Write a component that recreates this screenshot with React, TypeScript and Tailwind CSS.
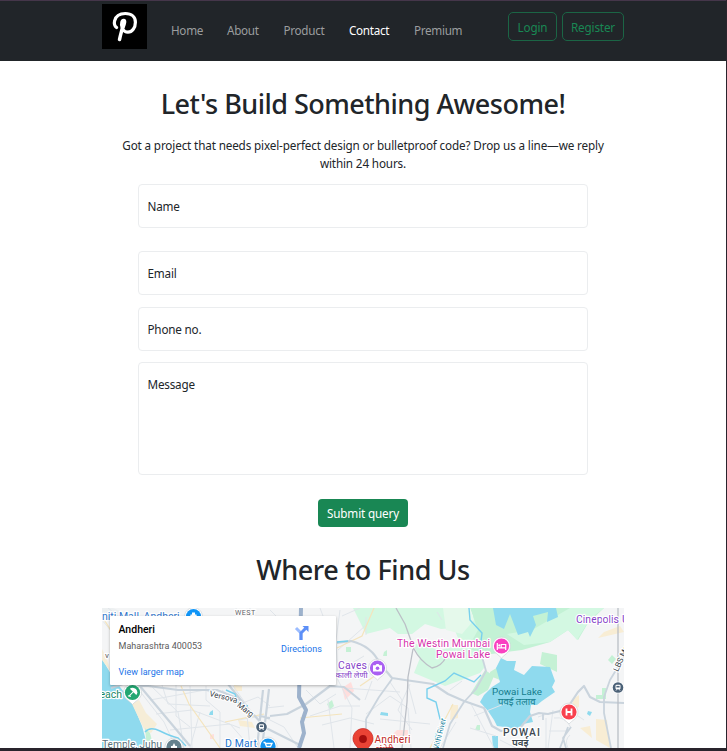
import type { ReactNode } from "react";

const navItems = [
  { label: "Home", box: "w-[56px]", active: false },
  { label: "About", box: "w-[56.5px]", active: false },
  { label: "Product", box: "w-[65.5px]", active: false },
  { label: "Contact", box: "w-[65px]", active: true },
  { label: "Premium", box: "w-[60px]", active: false },
];

function Logo() {
  return (
    <div className="mt-[3px] h-[45px] w-[45px] shrink-0 bg-black">
      <svg viewBox="0 0 45 45" className="h-full w-full" fill="none" stroke="#fff" strokeLinecap="round" strokeLinejoin="round">
        <path d="M14.6 23.6C12.4 21.8 12 19.3 12.6 16.8C13.8 12 18.2 9.5 23.3 9.5C29.6 9.5 33.4 13 33.4 18.2C33.4 23.8 30.2 28.2 25.9 28.2C23.6 28.2 22 27.2 21.2 25.6" strokeWidth="3.2" />
        <path d="M21.8 16.8C21.4 22 19 28 17.5 35.6" strokeWidth="3.5" />
        <path d="M19.8 23.2C18.6 19.5 19.6 15.7 21.9 16C24 16.4 22.8 20 21.4 23.6" strokeWidth="2.6" />
      </svg>
    </div>
  );
}

function Header() {
  return (
    <header className="h-[61px] border-t border-[#45364a] bg-[#212529]">
      <div className="mx-auto flex w-[522px] items-start">
        <Logo />
        <nav className="ml-6 mt-5 flex tracking-[-0.3px]">
          {navItems.map((item) => (
            <a key={item.label} className={`${item.box} ${item.active ? "text-white" : "text-[#9b9d9f]"}`}>
              {item.label}
            </a>
          ))}
        </nav>
        <div className="ml-auto mt-[11px] flex gap-[5px] tracking-[-0.15px] text-[#198754]">
          <button className="h-[29px] w-[49px] rounded-[5px] border border-[#1b6545] pt-px">Login</button>
          <button className="h-[29px] w-[62px] rounded-[5px] border border-[#1b6545] pt-px">Register</button>
        </div>
      </div>
    </header>
  );
}

function Field({ label, className }: { label: string; className: string }) {
  return <div className={`rounded-[4px] border border-[#ebedef] px-[8.5px] pt-3 text-[#212529] ${className}`}>{label}</div>;
}

function Pin({ x, y, color, children }: { x: number; y: number; color: string; children?: ReactNode }) {
  return (
    <g transform={`translate(${x} ${y})`}>
      <path d="M-8.6 2.8A9 9 0 1 1 8.6 2.8C7.4 6.8 3 8.6 0 12C-3 8.6-7.4 6.8-8.6 2.8Z" fill="#fff" stroke="#c9ced1" strokeWidth=".6" />
      <circle r="7.6" fill={color} />
      {children}
    </g>
  );
}

function Station({ x, y }: { x: number; y: number }) {
  return (
    <g transform={`translate(${x} ${y})`}>
      <circle r="6" fill="#fff" />
      <circle r="5.3" fill="#4b6177" />
      <rect x="-2.5" y="-2.8" width="5" height="4.5" rx="1" fill="#fff" />
      <path d="M-1.6-1.6H1.6V0H-1.6Z" fill="#4b6177" />
      <path d="M-2 3L-1 1.7M2 3L1 1.7" stroke="#fff" />
    </g>
  );
}

const minorRoads =
  "M102 620L112 632M108 608L118 616M139 690L164 722L176 748M150 685L178 712L184 748M162 685L168 704L210 706M176 685V716L190 727M190 686L192 748M206 686V700L220 712V748M150 700L205 690L228 700M156 714L192 710L240 728M170 730L230 724L244 740M200 712L190 748M222 690L240 704L258 697L270 706M233 686L246 704L250 748M238 720L262 716L284 727L298 748M266 708L284 706M306 690L320 704L336 694M310 716L340 706L360 706M328 700L334 748M340 610L336 640L338 680L352 708L350 748M338 650L365 626M337 672L364 656M344 688L400 692M322 725L350 718L374 724M366 714L390 696L408 708L411 748M390 682L402 700L400 730M407 680L416 714M365 700L372 681M380 719L430 724M410 684L398 710L412 730M366 617V635M474 716L504 704M440 748L456 722M470 702L494 748M538 717L550 713L572 710M546 718V748M549 731L566 731M553 710L548 748M554 718Q566 716 571 728M570 735Q564 740 568 748M578 716L584 720M450 690L462 681M437 612L442 620M470 728L496 736M500 740L516 748M270 610L276 616M236 608V617M250 608V617M320 608L323 616M360 608L342 616";

function StreetMap() {
  return (
    <svg viewBox="102 608 522 140" className="block h-[140px] w-[522px] bg-[#f4f5f6] font-['Roboto','Noto_Sans',sans-serif]">
      <g>
        <path d="M102 608H113L131 616H102Z" fill="#edf0f1" />
        <path d="M102 659L111 674L120 687L132 702L142 726L148 748H102Z" fill="#8fdaee" />
        <path d="M132 704L139 700L146 713L157 724L151 733L144 729ZM102 649L106 657L111 672L102 660Z" fill="#f6edd7" />
        <path d="M145 728L150 733L154 748H147Z" fill="#c5f1d5" />
        <path d="M353 608H458L470 616L489 620L480 636L490 638L488 650L458 638L454 628L441 629L425 624L412 634L398 634L390 628L366 634Z" fill="#d3f8e2" />
        <path d="M412 643L440 650L470 643L484 650L484 668L480 673L445 686L414 673L420 658Z" fill="#d3f8e2" />
        <path d="M440 608H604L588 623L578 640L568 630L550 642L522 650L484 655L468 648L478 630L470 608Z" fill="#c3f2d5" />
        <path d="M443 608H470L474 620L462 634L446 630Z" fill="#e5f9eb" />
        <path d="M507 634L532 630L570 608H604L590 619L577 640L568 630L550 642L524 645Z" fill="#d3f8e2" />
        <path d="M542 652L557 655V672L540 664ZM612 655L616 659L612 664L608 660ZM471 693L485 670L494 676L488 690L478 696ZM490 672L498 667L500 680L490 676ZM602 688H606V699H596V695H602ZM327 704L332 700L334 706L330 710ZM346 647H351V652H346ZM384 652L387 650V656H383ZM477 725L480 725V730H475Z" fill="#c5f1d5" />
        <path d="M493 608L496 625L504 629L510 614L518 635L528 632L530 637L536 625L533 616L548 612L547 622L558 617L556 608Z" fill="#8fdaee" />
        <path d="M501 658L507 661L516 661L514 670L524 675L532 666L550 667L555 681L552 687L555 692L542 701L537 705L531 705L530 712L533 722L523 724L519 729L497 726L494 720L488 711L480 702L484 695L492 687L500 682L496 668ZM492 736L498 736V748H493ZM381 712L388 713V716L380 715ZM588 711L592 712L590 716L587 714ZM210 712L213 710V715H209Z" fill="#8fdaee" />
        <path d="M342 688L351 682L354 691L345 700ZM397 730H408V743H392V735ZM210 735L214 734V739H210Z" fill="#ffdedd" />
        <path d="M451 705L458 705V718L450 720ZM596 719L607 720L610 748L596 740ZM604 632L620 626L624 632L598 638ZM573 699L579 695V707L572 710ZM234 685L242 686V691H234ZM238 720L252 722L255 728L240 726ZM580 728L590 726L592 738Z" fill="#f8edd4" />
      </g>

      <path d={minorRoads} fill="none" stroke="#e0e5ea" strokeWidth="1" />
      <g fill="none" stroke="#f4e4bd" strokeWidth="1.2">
        <path d="M181 686L189 704L220 748M102 616L118 642M337 648L362 636L374 608M360 686L382 671M225 722L264 714M300 718L342 714M430 748L453 704" />
      </g>
      <g fill="none" stroke="#cad4dd" strokeLinejoin="round">
        <path d="M139 685L190 746M111 688L126 683L178 690L217 690L239 699L266 728L302 746M228 684L244 704M270 716L287 714L306 704L330 686L344 687L360 700M270 718L260 716M263 690L257 748M269 689L262 748M337 643L351 641Q372 646 380 664L387 672L392 678L405 680L433 684L448 694L464 701L484 708L492 726L501 731L520 728L530 716L539 713L548 714L560 711L570 704L578 692L584 686L590 697L600 702L624 703" strokeWidth="2.2" />
        <path d="M366 719L379 697L392 679M366 719V732M443 748L450 724L464 702L476 689L486 671L477 639M624 657L610 680L604 697L604 713L611 748M571 727L563 738L566 748M543 714V720M568 727L560 748" strokeWidth="1.8" />
        <path d="M301 608L299 697L306 710L302 722L304 733L299 748" strokeWidth="4" stroke="#9db2cc" />
        <path d="M396 608L405 624L414 649Q420 661 432 668Q442 666 446 657M413 649L408 677L407 702L402 748M618 608V748" strokeWidth="1.3" stroke="#bbbfc6" />
      </g>
      <path d="M145 732Q150 726 160 731T178 738L186 746M226 690L235 694L238 703L248 706M337 642L348 641M469 608L470 620L482 633L480 650M481 675L474 682L454 673L445 681L427 689L427 698L436 702L440 719L445 725L436 734L434 748" fill="none" stroke="#79d0ed" strokeWidth="1.4" />

      <g stroke="#fff" strokeWidth="2.4" strokeLinejoin="round" paintOrder="stroke" fontSize="10.5">
        <text x="102" y="620" fill="#3378cc">niti Mall, Andheri</text>
        <text x="235" y="615" fontSize="7.2" fill="#5f6368" letterSpacing=".4">WEST</text>
        <text x="105" y="658" fontSize="8" fill="#555">v</text>
        <text x="99.5" y="698" fill="#188768">each</text>
        <text x="102" y="748" fill="#59717c" textLength="60">Temple, Juhu</text>
        <text x="225" y="747" fill="#1a73ce" textLength="32">D Mart</text>
        <text transform="translate(209 696) rotate(14)" fontSize="8" fill="#39434a">Versova</text>
        <text transform="translate(236.5 706) rotate(38)" fontSize="8" fill="#39434a">Marg</text>
        <text x="338" y="669" fill="#8643c9" textLength="29">Caves</text>
        <text x="335.5" y="677.5" fontSize="8.3" fill="#8643c9">काली लेणी</text>
        <text x="397" y="646.5" fill="#d635ad" textLength="93">The Westin Mumbai</text>
        <text x="436" y="657.5" fill="#d635ad" textLength="54">Powai Lake</text>
        <text x="576" y="622.5" fill="#8643c9" textLength="43">Cinepolis</text>
        <text x="622" y="622.5" fill="#8643c9">U</text>
        <text x="492" y="694.5" stroke="none" fontSize="9.8" fill="#147d8d" textLength="50">Powai Lake</text>
        <text x="498" y="704.5" stroke="none" fontSize="9.6" fill="#147d8d">पवई तलाव</text>
        <text x="503" y="735.5" fontSize="10.3" fontWeight="500" fill="#3c4750" textLength="37">POWAI</text>
        <text x="512" y="745.5" fontSize="9.8" fontWeight="600" fill="#3c4750">पवई</text>
        <text transform="translate(618 672) rotate(-66)" fontSize="8" fill="#39434a">LBS Marg</text>
        <text transform="translate(438 751) rotate(-76)" fontSize="8" fill="#16819b" textLength="33">Mithi River</text>
        <text x="374.5" y="743" fill="#bf2b29" textLength="36">Andheri</text>
        <text x="375" y="752.5" fontSize="9" fill="#bf2b29">अंधेरी</text>
      </g>

      <Pin x={193.5} y={616.5} color="#1095f7"><path d="M-3-2H3L4 5H-4ZM-1.5-2V-4H1.5V-2" fill="#fff" /></Pin>
      <Pin x={132.5} y={692.5} color="#22a772">
        <g transform="rotate(45)" fill="#fff">
          <path d="M-4.5-.8A4.5 4 0 0 1 4.5-.8Z" />
          <path d="M-.5-1H.5V5H-.5Z" />
        </g>
        <path d="M-4.6 3.4L-1.5 3.8" stroke="#fff" />
      </Pin>
      <Pin x={377.5} y={668} color="#aa60f2">
        <path d="M-4.5-2.7H-2L-1-4H1L2-2.7H4.5V3.5H-4.5Z" fill="#fff" /><circle r="1.8" cy=".3" fill="#aa60f2" />
      </Pin>
      <Pin x={501.5} y={646} color="#f941c1"><path d="M-4.2-3V4M-4.2 1.8H4.2V4M4.2 2V-1.5H-.3V1.5" stroke="#fff" strokeWidth="1.2" fill="none" /><circle cx="-2.2" cy="-.6" r="1.1" fill="#fff" /></Pin>
      <Pin x={569} y={712} color="#f9404e"><path d="M-2.5-3.5V3.5M2.5-3.5V3.5M-2.5 0H2.5" stroke="#fff" strokeWidth="1.8" /></Pin>
      <Pin x={174} y={747} color="#66818e"><path d="M-5 3V1H-3V-1H-1.5L0-4L1.5-1H3V1H5V3Z" fill="#fff" /></Pin>
      <Pin x={268} y={746} color="#1293ef"><path d="M-4.5-3.5H-3L-1.5 .5H2.5L4-2.5H-2.5" stroke="#fff" strokeWidth="1.3" fill="none" /></Pin>
      <Station x={261.5} y={727} />
      <Station x={618} y={687.5} />
      <path d="M353.3 741A10 10 0 1 1 372.7 741C371 746 367 748 365 752H361C359 748 355 746 353.3 741Z" fill="#ea4335" stroke="#c5221f" strokeWidth=".7" />
      <circle cx="363" cy="739" r="3.9" fill="#a50e0e" />
    </svg>
  );
}

function PlaceCard() {
  return (
    <div className="absolute left-2 top-2 flex h-[69px] w-[225.5px] justify-between rounded-[1px] bg-white pl-[8.5px] pr-[13.5px] pt-[7px] font-['Roboto',sans-serif] shadow-[0_1px_3px_rgba(0,0,0,.28)]">
      <div>
        <div className="w-fit text-[10.5px] font-medium leading-[14px] tracking-normal text-black">Andheri</div>
        <div className="mt-[3px] text-[9px] leading-[12px] tracking-[0.02px] text-[#5b5b5b]">Maharashtra 400053</div>
        <div className="mt-[14px] text-[9px] leading-[12px] tracking-[0.05px] text-[#1a73e8]">View larger map</div>
      </div>
      <div className="flex flex-col items-center pt-[2px]">
        <svg viewBox="0 0 16 16" className="h-4 w-4" fill="none">
          <path d="M2 3L7 8V15" stroke="#9bbcff" strokeWidth="3" />
          <path d="M7 15V8L11.5 3.5" stroke="#5c8ff7" strokeWidth="3" />
          <path d="M8.5 1H14.5V7Z" fill="#5c8ff7" />
        </svg>
        <span className="mt-[2px] text-[9px] leading-[12px] tracking-[0.05px] text-[#1a73e8]">Directions</span>
      </div>
    </div>
  );
}

export default function App() {
  return (
    <div className="h-[751px] w-[727px] overflow-hidden border-b-[3px] border-r border-[#29242c] bg-white font-['Noto_Sans','Open_Sans',sans-serif] text-[11.7px] leading-[18px] text-[#212529]">
      <Header />
      <main className="mx-auto flex w-[522px] flex-col items-center">
        <h1 className="mt-[26px] whitespace-nowrap text-[27px] font-medium leading-[34px] tracking-[-0.52px]">Let's Build Something Awesome!</h1>
        <p className="mt-[15px] whitespace-nowrap text-center tracking-[-0.14px]">
          Got a project that needs pixel-perfect design or bulletproof code? Drop us a line—we reply
          <br />
          within 24 hours.
        </p>
        <form className="mt-3 flex w-[450px] flex-col tracking-[-0.2px]">
          <Field label="Name" className="h-11" />
          <Field label="Email" className="mt-[23px] h-11" />
          <Field label="Phone no." className="mt-3 h-11" />
          <Field label="Message" className="mt-[11px] h-[113px]" />
          <button type="button" className="mt-6 h-7 w-[90px] self-center whitespace-nowrap rounded-[4px] bg-[#198754] tracking-[-0.15px] text-white">Submit query</button>
        </form>
        <h2 className="mt-[26px] whitespace-nowrap text-[27px] font-medium leading-[34px] tracking-[-0.42px]">Where to Find Us</h2>
        <div className="relative mt-[21px]">
          <StreetMap />
          <PlaceCard />
        </div>
      </main>
    </div>
  );
}
